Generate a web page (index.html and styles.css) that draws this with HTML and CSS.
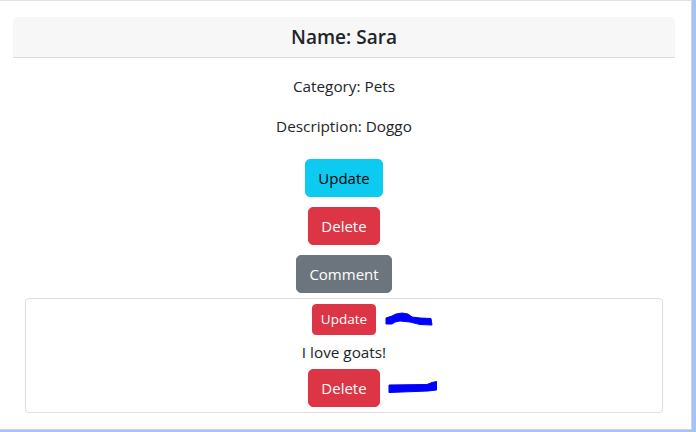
FILE: index.html
```html
<!DOCTYPE html>
<html>
<head>
<meta charset="utf-8">
<link rel="stylesheet" href="styles.css">
</head>
<body>
<div class="window">
  <div class="card">
    <div class="card-header">Name: Sara</div>
    <div class="card-body">
      <div class="info">
        <p class="line">Category: Pets</p>
        <p class="line">Description: Doggo</p>
      </div>
      <div class="actions">
        <button class="btn btn-info">Update</button>
        <button class="btn btn-danger">Delete</button>
        <button class="btn btn-secondary">Comment</button>
      </div>
      <div class="comment">
        <div class="mark-wrap">
          <button class="btn btn-sm btn-danger">Update</button>
          <svg class="scribble scribble-update" width="60" height="16" viewBox="0 0 60 16">
            <path d="M10,6 L16,4 L20,2 L26,1 L32,2 L36,5 L44,6 L55,6.5 L56,13 L44,12.5 L34,10 L24,9 L19,10 L16,12 L10,12 Z" fill="#0000ff" stroke="#0000ff" stroke-width="1" stroke-linejoin="round"/>
          </svg>
        </div>
        <p class="comment-text">I love goats!</p>
        <div class="mark-wrap">
          <button class="btn btn-danger">Delete</button>
          <svg class="scribble scribble-delete" width="60" height="16" viewBox="0 0 60 16">
            <path d="M9,6 L47,5.5 L52,3.5 L56.5,2.5 L56.5,11 L48,12 L9,13.5 Z" fill="#0000ff" stroke="#0000ff" stroke-width="1" stroke-linejoin="round"/>
          </svg>
        </div>
      </div>
    </div>
  </div>
</div>
</body>
</html>
```
FILE: styles.css
```css
html {
  background: #a2c4f9;
}
body {
  margin: 0;
  font-family: "Open Sans", "Noto Sans", sans-serif;
  color: #212529;
}
.window {
  box-sizing: border-box;
  width: 692px;
  height: 430px;
  background: #fff;
  border-top: 1px solid #e2e2e2;
  border-right: 1px solid #d4d4d4;
  border-bottom: 1px solid #d4d4d4;
  padding: 16px 16px 0 13px;
}
.card {
  display: flex;
  flex-direction: column;
}
.card-header {
  box-sizing: border-box;
  height: 41px;
  background: #f7f7f7;
  border-bottom: 1px solid #dcdcdc;
  border-radius: 5px 5px 0 0;
  display: flex;
  align-items: center;
  justify-content: center;
  font-size: 19px;
  font-weight: 600;
  color: #212529;
}
.card-body {
  padding: 16px 12px 0;
  display: flex;
  flex-direction: column;
  align-items: stretch;
}
.info {
  display: flex;
  flex-direction: column;
  gap: 16px;
  margin-bottom: 21px;
}
.line {
  margin: 0;
  text-align: center;
  font-size: 15.3px;
  line-height: 24px;
}
.actions {
  display: flex;
  flex-direction: column;
  align-items: center;
  gap: 10px;
  margin-bottom: 5px;
}
.btn {
  font-family: inherit;
  font-size: 15px;
  line-height: 24px;
  height: 38px;
  padding: 0 12px;
  border: 1px solid transparent;
  border-radius: 5px;
  cursor: pointer;
}
.btn-sm {
  font-size: 13.5px;
  line-height: 21px;
  height: 31px;
  padding: 0 8px;
  border-radius: 4px;
}
.btn-info {
  background: #0dcaf0;
  border-color: #0dcaf0;
  color: #000;
}
.btn-danger {
  background: #dc3545;
  border-color: #dc3545;
  color: #fff;
}
.btn-secondary {
  background: #6c757d;
  border-color: #6c757d;
  color: #fff;
}
.comment {
  border: 1px solid #dedede;
  border-radius: 4px;
  padding: 5px;
  display: flex;
  flex-direction: column;
  align-items: center;
  gap: 5px;
}
.comment-text {
  margin: 0;
  font-size: 15.3px;
  line-height: 24px;
}
.mark-wrap {
  position: relative;
  display: flex;
}
.scribble {
  position: absolute;
  display: block;
  left: 100%;
}
.scribble-update {
  top: 8px;
}
.scribble-delete {
  top: 10px;
}
```
